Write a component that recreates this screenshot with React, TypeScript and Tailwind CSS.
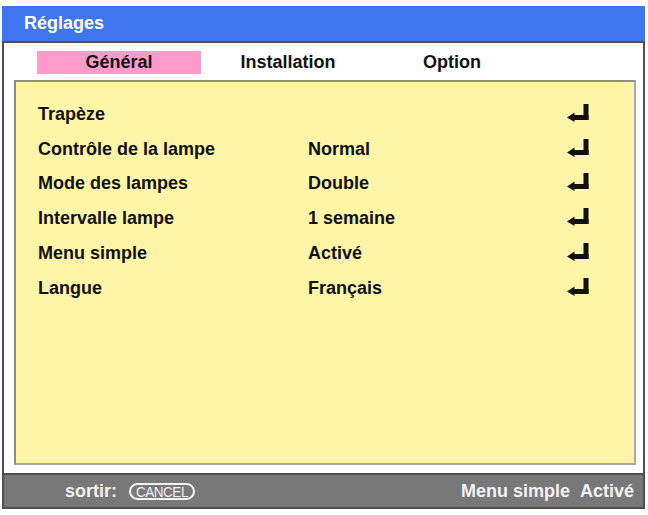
import React from 'react';

const rows = [
  { label: 'Trapèze', value: '' },
  { label: 'Contrôle de la lampe', value: 'Normal' },
  { label: 'Mode des lampes', value: 'Double' },
  { label: 'Intervalle lampe', value: '1 semaine' },
  { label: 'Menu simple', value: 'Activé' },
  { label: 'Langue', value: 'Français' },
];

const EnterIcon = () => (
  <svg width="22" height="18" viewBox="0 0 22 18" className="block -mt-[3px]">
    <rect x="16.5" y="0" width="5" height="16" fill="#111" />
    <rect x="6" y="11" width="15.5" height="5" fill="#111" />
    <polygon points="0,13.5 7.5,8.5 7.5,18" fill="#111" />
  </svg>
);

const App = () => {
  return (
    <div className="w-[648px] h-[515px] bg-white pt-[6px] pl-[2px] font-['Liberation_Sans',Arial,sans-serif] font-bold">
      <div className="w-[643px] h-[503px] flex flex-col">
        {/* Title bar */}
        <div className="h-[35px] bg-[#3f75ef] flex items-center pl-[22px] text-white text-[18px]">
          Réglages
        </div>

        <div className="flex-1 flex flex-col border-x-2 border-b-2 border-t-2 border-[#4f4f4f] bg-white">
          {/* Tabs */}
          <div className="h-[37px] flex items-start pt-[8px] pl-[33px] text-[18px] text-[#111]">
            <div className="w-[164px] h-[23px] bg-[#ff9bcb] flex items-center justify-center">Général</div>
            <div className="w-[174px] h-[23px] flex items-center justify-center">Installation</div>
            <div className="w-[154px] h-[23px] flex items-center justify-center">Option</div>
          </div>

          {/* Settings panel */}
          <div className="h-[385px] ml-[10px] mr-[7px] border-2 border-t-[#8c8c8c] border-l-[#8c8c8c] border-r-[#a8a8a8] border-b-[#a8a8a8] bg-[#fff5a8] pt-[15px] text-[18px] text-[#111]">
            {rows.map((row) => (
              <div key={row.label} className="h-[34.8px] flex items-center pl-[22px] pr-[45px]">
                <div className="w-[270px]">{row.label}</div>
                <div className="flex-1">{row.value}</div>
                <EnterIcon />
              </div>
            ))}
          </div>

          <div className="flex-1" />

          {/* Footer */}
          <div className="h-[34px] border-t-2 border-[#4f4f4f] bg-[#787878] flex items-center text-[18px] text-[#f2f2f2]">
            <span className="ml-[61px]">sortir:</span>
            <span className="ml-[12px] h-[17px] w-[66px] rounded-full border-2 border-[#f2f2f2] flex items-center justify-center overflow-hidden">
              <span className="text-[15px] leading-none font-normal tracking-[-0.5px] scale-x-90">CANCEL</span>
            </span>
            <span className="ml-auto mr-[10px]">Menu simple</span>
            <span className="mr-[9px]">Activé</span>
          </div>
        </div>
      </div>
    </div>
  );
};

export default App;
